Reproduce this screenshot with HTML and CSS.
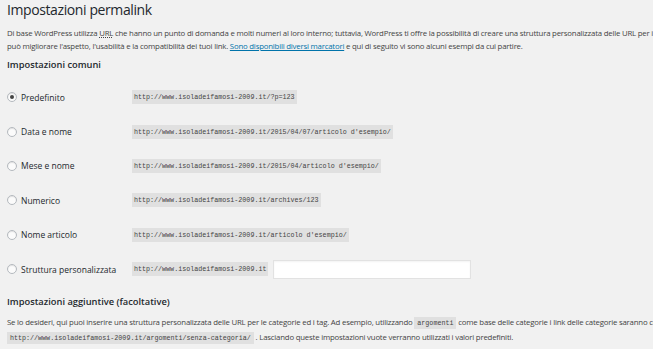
FILE: index.html
```html
<!DOCTYPE html>
<html lang="it">
<head>
  <meta charset="UTF-8">
  <meta name="viewport" content="width=device-width, initial-scale=1.0">
  <title>Impostazioni permalink</title>
  <link rel="stylesheet" href="styles.css">
</head>
<body>

  <!-- Permalink settings -->
  <div class="wrap">
    <h1 class="page-title">Impostazioni permalink</h1>

    <p class="intro">
      <span class="line">Di base WordPress utilizza <abbr>URL</abbr> che hanno un punto di domanda e molti numeri al loro interno; tuttavia, WordPress ti offre la possibilità di creare una struttura personalizzata delle URL per i tuoi permalink e archivi.</span>
      <span class="line">può migliorare l'aspetto, l'usabilità e la compatibilità dei tuoi link. <a href="#" class="link-text">Sono disponibili diversi marcatori</a> e qui di seguito vi sono alcuni esempi da cui partire.</span>
    </p>

    <h2 class="section-title">Impostazioni comuni</h2>

    <div class="options">
      <label class="option">
        <span class="option-label"><input type="radio" name="selection" class="radio" checked> Predefinito</span>
        <code>http://www.isoladeifamosi-2009.it/?p=123</code>
      </label>
      <label class="option">
        <span class="option-label"><input type="radio" name="selection" class="radio"> Data e nome</span>
        <code>http://www.isoladeifamosi-2009.it/2015/04/07/articolo d'esempio/</code>
      </label>
      <label class="option">
        <span class="option-label"><input type="radio" name="selection" class="radio"> Mese e nome</span>
        <code>http://www.isoladeifamosi-2009.it/2015/04/articolo d'esempio/</code>
      </label>
      <label class="option">
        <span class="option-label"><input type="radio" name="selection" class="radio"> Numerico</span>
        <code>http://www.isoladeifamosi-2009.it/archives/123</code>
      </label>
      <label class="option">
        <span class="option-label"><input type="radio" name="selection" class="radio"> Nome articolo</span>
        <code>http://www.isoladeifamosi-2009.it/articolo d'esempio/</code>
      </label>
      <label class="option">
        <span class="option-label"><input type="radio" name="selection" class="radio"> Struttura personalizzata</span>
        <code>http://www.isoladeifamosi-2009.it</code>
        <input type="text" class="structure-input">
      </label>
    </div>

    <h2 class="section-title extra">Impostazioni aggiuntive (facoltative)</h2>

    <p class="outro">
      <span class="line">Se lo desideri, qui puoi inserire una struttura personalizzata delle URL per le categorie ed i tag. Ad esempio, utilizzando <code>argomenti</code> come base delle categorie i link delle categorie saranno come</span>
      <span class="line"><code>http://www.isoladeifamosi-2009.it/argomenti/senza-categoria/</code> . Lasciando queste impostazioni vuote verranno utilizzati i valori predefiniti.</span>
    </p>
  </div>

</body>
</html>
```

FILE: styles.css
```css
* {
  margin: 0;
  padding: 0;
  box-sizing: border-box;
}

html, body {
  overflow: hidden;
}

body {
  font-family: "Open Sans", "Noto Sans", sans-serif;
  background: #f1f1f1;
  color: #444;
  font-size: 8.5px;
}

/* Wrap */
.wrap {
  padding: 0 0 0 7px;
}

.page-title {
  font-size: 14px;
  font-weight: 400;
  letter-spacing: -0.4px;
  line-height: 20px;
  color: #23282d;
}

.line {
  display: block;
  white-space: nowrap;
}

.intro,
.outro {
  font-size: 7.8px;
  letter-spacing: -0.2px;
}

.intro {
  margin-top: 6.5px;
  line-height: 13px;
}

abbr {
  text-decoration: underline dotted;
}

.link-text {
  color: #0073aa;
  text-decoration: underline;
}

.section-title {
  font-size: 9.3px;
  font-weight: 600;
  line-height: 14px;
  color: #23282d;
  margin-top: 5.5px;
}

.section-title.extra {
  margin-top: 9px;
}

/* Options */
.options {
  display: flex;
  flex-direction: column;
  margin-top: 8px;
}

.option {
  display: flex;
  align-items: center;
  height: 34.4px;
}

.option-label {
  display: flex;
  align-items: center;
  gap: 4px;
  width: 125px;
  color: #23282d;
}

.radio {
  appearance: none;
  width: 10px;
  height: 10px;
  border: 1px solid #b4b9be;
  border-radius: 50%;
  background: #fbfbfb;
  box-shadow: inset 0 1px 1px rgba(0, 0, 0, 0.1);
  display: flex;
  align-items: center;
  justify-content: center;
}

.radio:checked::before {
  content: "";
  width: 4px;
  height: 4px;
  border-radius: 50%;
  background: #444;
}

code {
  font-family: "Liberation Mono", "DejaVu Sans Mono", monospace;
  font-size: 6.7px;
  letter-spacing: 0;
  background: rgba(0, 0, 0, 0.07);
  padding: 3px 2px;
  color: #444;
}

.structure-input {
  width: 198px;
  height: 19px;
  margin-left: 5px;
  border: 1px solid #e2e2e2;
  background: #fff;
  box-shadow: inset 0 1px 2px rgba(0, 0, 0, 0.05);
  outline: none;
}

.outro {
  margin-top: 6px;
  line-height: 14px;
}

.outro code {
  padding: 2px 3px;
}
```
